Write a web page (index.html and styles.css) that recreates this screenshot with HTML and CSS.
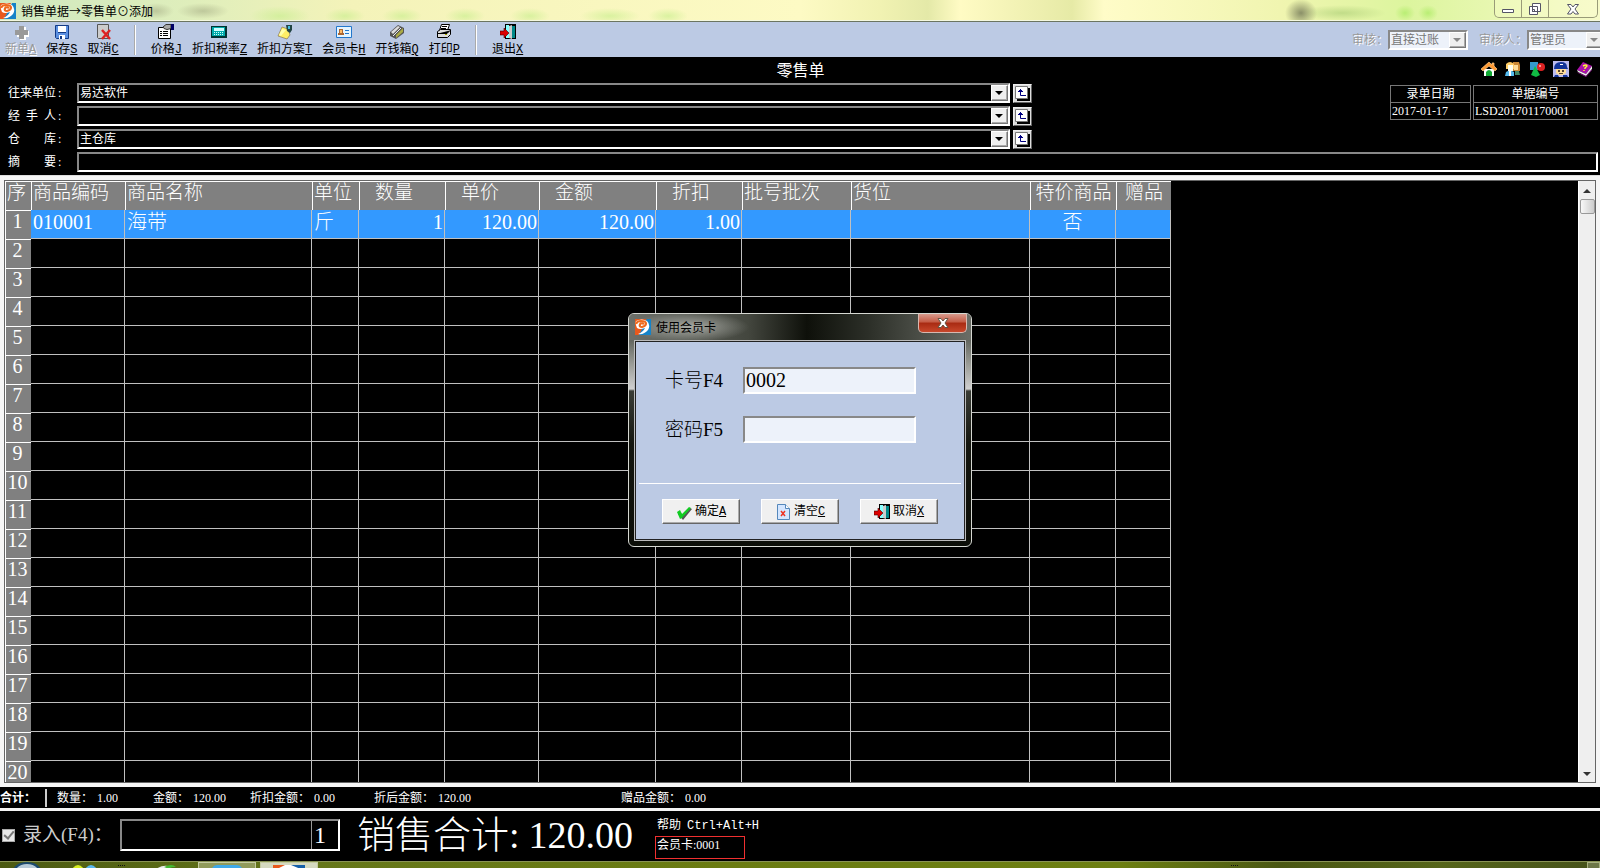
FILE: index.html
```html
<!DOCTYPE html>
<html lang="zh-CN">
<head>
<meta charset="utf-8">
<title>销售单据→零售单</title>
<link rel="stylesheet" href="styles.css">
</head>
<body>
<svg class="defs" aria-hidden="true">
  <symbol id="logo" viewBox="0 0 16 16">
    <path fill="#e8591c" d="M0 0h11L5 16H0z"/><path fill="#1583c8" d="M12 0h4v16H4z"/>
    <path fill="#fff" d="M1 2q6-3 11 0 4 4 1 9-4 5-10 4 5-2 7-6-5 2-8 0Q0 5 1 2z"/>
    <path fill="none" stroke="#ee6a1d" stroke-width="2.200" d="M9 5Q6 3 5 5.500T7 8q4-1 4-3.500T6 2Q2 2 1 5"/>
  </symbol>
  <symbol id="door" viewBox="0 0 16 16">
    <path fill="#000" d="M5 0h11v15H5z"/><path fill="#8ff" d="M6 1h3v13H6z"/><path fill="#088" d="M12 2h3v12h-3z"/><path fill="#ccc" d="m9 2 3-1v14l-3-1z"/>
    <path fill="#d00" stroke="#400" stroke-width=".6" d="M0 7h4V4l5 5-5 5v-3H0z"/>
  </symbol>
  <symbol id="up" viewBox="0 0 16 16">
    <path d="M3 3h13v13H3z"/><path fill="#fff" stroke="#777" d="M1.500 1.500h12v12h-12z"/>
    <path fill="none" stroke="#000080" d="M6.500 4v6.500H12M4 6.500h5M5 5.500h3"/>
  </symbol>
</svg>

<header class="titlebar">
  <svg class="ico"><use href="#logo"/></svg>
  <h1>销售单据→零售单⊙添加</h1>
  <div class="winbtns">
    <button aria-label="最小化"><svg viewBox="0 0 14 14"><path fill="#fff" stroke="#556" d="M1.500 7.500h11v3h-11z"/></svg></button>
    <button aria-label="还原"><svg viewBox="0 0 14 14"><path fill="#fff" stroke="#556" d="M4.500 1.500h8v8h-8zM1.500 4.500h8v8h-8zM4.500 7.500h2v2h-2z"/></svg></button>
    <button class="wide" aria-label="关闭"><svg viewBox="0 0 14 14"><path fill="#fff" stroke="#556" d="M1.500 2.500h3.500l2 2.500 2-2.500h3.500L9 7l3.500 5H9L7 9.500 5 12H1.500L5 7z"/></svg></button>
  </div>
</header>

<nav class="toolbar">
  <button class="tool" disabled><svg viewBox="0 0 16 16"><path fill="#fff" d="M7 3h6v4h3v6h-3v3H7v-3H4V7h3z"/><path fill="#999" d="M6 2h5v4h4v5h-4v4H6v-4H2V6h4z"/></svg><span>新单<u>A</u></span></button>
  <button class="tool"><svg viewBox="0 0 16 16"><path fill="#5b8fe0" stroke="#123a86" d="M1.500 1.500h13v13h-12l-1-1z"/><path fill="#fff" d="M4 2h8v6H4zM5 11h6v4H5z"/><path fill="#123a86" d="M6 12h2v3H6zM4 8h8v1H4z"/></svg><span>保存<u>S</u></span></button>
  <button class="tool"><svg viewBox="0 0 16 16"><path fill="#ccc" stroke="#555" d="M2.500.5h11v14h-10l-1-1z"/><path fill="none" stroke="#d22" stroke-width="2.500" d="m7 6 8 9M15 6l-8 9"/></svg><span>取消<u>C</u></span></button>
  <i class="sep"></i>
  <button class="tool"><svg viewBox="0 0 16 16"><path fill="#fff" stroke="#000" d="M.5 3.500h12v11H.5z"/><path stroke="#000" d="M2 7.500h2m1 0h5M2 9.500h2m1 0h5M2 11.500h2m1 0h5"/><path fill="#aaa" stroke="#333" d="m5 3 3-2.500h5v4l-4 1-3-1z"/><path fill="#006" d="M13 0h3v6h-3z"/></svg><span>价格<u>J</u></span></button>
  <button class="tool"><svg viewBox="0 0 16 16"><path fill="#033" d="M0 2h16v12H0z"/><path fill="#0aa" d="M1 3h13v9H1z"/><path fill="#cff" d="M3 4h10v3H3z"/><path stroke="#cff" stroke-dasharray="1 1" d="M3 8.500h10M3 10.500h10"/></svg><span>折扣税率<u>Z</u></span></button>
  <button class="tool"><svg viewBox="0 0 16 16"><path fill="#fe6" stroke="#875" stroke-width=".7" d="m5 3 6 2 2 6-3 4-9-3z"/><path fill="#ffa" d="m5 5 4 1-5 6-2-1z"/><path fill="#244" d="M9 1h6v5l-2 3-3-2z"/><path fill="#4bd" d="M11 2h2v3h-2z"/></svg><span>折扣方案<u>T</u></span></button>
  <button class="tool"><svg viewBox="0 0 16 16"><path fill="#e5f5ff" stroke="#27c" d="M.5 2.500h15v11H.5z"/><path fill="#a63" d="M3 5h4v4h1v2H2V9h1z"/><path fill="#fb6" d="M4 6h2v3H4z"/><path stroke="#27c" d="M9 6.500h4M9 9.500h4"/></svg><span>会员卡<u>H</u></span></button>
  <button class="tool"><svg viewBox="0 0 16 16"><path fill="#555" d="m1 8 8-7 6 3v5l-8 6-6-3z"/><path fill="#ddd" d="m2 8 7-6 2 1-7 7z"/><path fill="#aa4" d="m7 11 7-7v4l-7 6z"/><path stroke="#eee" d="m4 12 8-8"/></svg><span>开钱箱<u>Q</u></span></button>
  <button class="tool"><svg viewBox="0 0 16 16"><path fill="#fff" stroke="#000" d="M5.500.5h8l-2 6h-8z"/><path fill="#ddd" stroke="#000" d="m1.500 7.500 3-2h10v5l-3 3h-10z"/><path stroke="#000" d="M6 2.500h5M5 4.500h5M2 9.500h9l3-3"/><path fill="#aa0" d="M9 10h2v1H9z"/></svg><span>打印<u>P</u></span></button>
  <i class="sep"></i>
  <button class="tool"><svg><use href="#door"/></svg><span>退出<u>X</u></span></button>
  <div class="audit">
    <label for="audit">审核：</label>
    <div class="combo light"><select id="audit" disabled><option>直接过账</option></select><i class="arrow"></i></div>
    <label for="auditor">审核人：</label>
    <div class="combo light last"><select id="auditor" disabled><option>管理员</option></select><i class="arrow"></i></div>
  </div>
</nav>

<section class="form">
  <div class="caption">
    <h2>零售单</h2>
    <div class="shortcuts">
      <svg viewBox="0 0 16 16"><path fill="#fff" d="M3 8h10v7H3z"/><path fill="#f93" stroke="#fc8" stroke-width=".7" d="M8 1 0 8l2 2 6-5 6 5 2-2-3-3V2h-2v2z"/><path fill="#1a3" d="M5 15v-4q3-4 6 0v4z"/></svg>
      <svg viewBox="0 0 16 16"><path fill="#c83" d="M8 1h6l1 3v6H8z"/><path fill="#fd9" d="M9 4h4v5H9z"/><path fill="#fc6" d="M1 3q4-4 8 0v5H1z"/><path fill="#ffe" d="M3 4h5v6H3z"/><path fill="#5be" d="m3 10-2 1-1 4h9v-4l-2-1z"/><path fill="#fff" d="M4 10h2v5H4z"/><path fill="#486" d="M10 10h4l1 4h-5z"/></svg>
      <svg viewBox="0 0 16 16"><path fill="#39c" d="M1 1h8v8H1z"/><circle cx="12" cy="6" r="4" fill="#d22"/><circle cx="11" cy="5" r="1" fill="#fbb"/><path fill="#1b4" d="m6 5 5 9-4 2-5-2z"/></svg>
      <svg viewBox="0 0 16 16"><path fill="#bbe" d="M0 0h16v16H0z"/><path fill="#139" d="M1 8q0-7 7-7 6 0 6 5l1 2z"/><path fill="#fd9" d="M3 8h10v4l-3 2H6l-3-2z"/><path fill="#543" d="M5 9h2v2H5zM9 9h2v2H9zM6 12h4v1H6z"/><path fill="#fff" d="M7 3h3v1H7z"/><path fill="#139" d="M2 14h3l1 2H1zM10 14h4l1 2h-5z"/></svg>
      <svg viewBox="0 0 16 16"><path fill="#a1a" d="m6 1 9 4-6 8-9-4z"/><path fill="#eee" d="m0 9 9 4 6-8v3l-6 7-8-4z"/><path fill="#818" d="m0 11 9 4 6-7v1l-6 7-8-4z"/><path fill="none" stroke="#ff3" stroke-width="1.400" d="M6 5q4-2 4 0l-2 2v1M7 9v1"/></svg>
    </div>
  </div>
  <div class="formbody">
    <div class="fields">
      <label for="f1">往来单位</label><b>:</b>
      <div class="combo"><select id="f1"><option>易达软件</option></select><i class="arrow"></i></div><button class="pick" aria-label="选择单位"><svg><use href="#up"/></svg></button>
      <label for="f2">经 手 人</label><b>:</b>
      <div class="combo"><select id="f2"><option></option></select><i class="arrow"></i></div><button class="pick" aria-label="选择经手人"><svg><use href="#up"/></svg></button>
      <label for="f3">仓 库</label><b>:</b>
      <div class="combo"><select id="f3"><option>主仓库</option></select><i class="arrow"></i></div><button class="pick" aria-label="选择仓库"><svg><use href="#up"/></svg></button>
    </div>
    <dl class="meta date"><dt>录单日期</dt><dd>2017-01-17</dd></dl>
    <dl class="meta code"><dt>单据编号</dt><dd>LSD201701170001</dd></dl>
  </div>
  <div class="memo"><label for="f4">摘 要</label><b>:</b><input id="f4" type="text"></div>
</section>

<main class="gridpane">
  <div class="gridbox">
    <div class="gridscroll">
      <table>
        <colgroup><col class="w26"><col class="w94"><col class="w187"><col class="w47"><col class="w86"><col class="w94"><col class="w117"><col class="w86"><col class="w109"><col class="w179"><col class="w86"><col class="w55"></colgroup>
        <thead><tr><th class="no">序</th><th>商品编码</th><th>商品名称</th><th>单位</th><th class="n">数量</th><th class="n">单价</th><th class="n">金额</th><th class="n">折扣</th><th>批号批次</th><th>货位</th><th class="c">特价商品</th><th class="c">赠品</th></tr></thead>
        <tbody>
          <tr class="on"><th>1</th><td>010001</td><td>海带</td><td>斤</td><td class="r">1</td><td class="r">120.00</td><td class="r">120.00</td><td class="r">1.00</td><td></td><td></td><td class="c">否</td><td></td></tr>
          <tr><th>2</th><td></td><td></td><td></td><td></td><td></td><td></td><td></td><td></td><td></td><td></td><td></td></tr>
          <tr><th>3</th><td></td><td></td><td></td><td></td><td></td><td></td><td></td><td></td><td></td><td></td><td></td></tr>
          <tr><th>4</th><td></td><td></td><td></td><td></td><td></td><td></td><td></td><td></td><td></td><td></td><td></td></tr>
          <tr><th>5</th><td></td><td></td><td></td><td></td><td></td><td></td><td></td><td></td><td></td><td></td><td></td></tr>
          <tr><th>6</th><td></td><td></td><td></td><td></td><td></td><td></td><td></td><td></td><td></td><td></td><td></td></tr>
          <tr><th>7</th><td></td><td></td><td></td><td></td><td></td><td></td><td></td><td></td><td></td><td></td><td></td></tr>
          <tr><th>8</th><td></td><td></td><td></td><td></td><td></td><td></td><td></td><td></td><td></td><td></td><td></td></tr>
          <tr><th>9</th><td></td><td></td><td></td><td></td><td></td><td></td><td></td><td></td><td></td><td></td><td></td></tr>
          <tr><th>10</th><td></td><td></td><td></td><td></td><td></td><td></td><td></td><td></td><td></td><td></td><td></td></tr>
          <tr><th>11</th><td></td><td></td><td></td><td></td><td></td><td></td><td></td><td></td><td></td><td></td><td></td></tr>
          <tr><th>12</th><td></td><td></td><td></td><td></td><td></td><td></td><td></td><td></td><td></td><td></td><td></td></tr>
          <tr><th>13</th><td></td><td></td><td></td><td></td><td></td><td></td><td></td><td></td><td></td><td></td><td></td></tr>
          <tr><th>14</th><td></td><td></td><td></td><td></td><td></td><td></td><td></td><td></td><td></td><td></td><td></td></tr>
          <tr><th>15</th><td></td><td></td><td></td><td></td><td></td><td></td><td></td><td></td><td></td><td></td><td></td></tr>
          <tr><th>16</th><td></td><td></td><td></td><td></td><td></td><td></td><td></td><td></td><td></td><td></td><td></td></tr>
          <tr><th>17</th><td></td><td></td><td></td><td></td><td></td><td></td><td></td><td></td><td></td><td></td><td></td></tr>
          <tr><th>18</th><td></td><td></td><td></td><td></td><td></td><td></td><td></td><td></td><td></td><td></td><td></td></tr>
          <tr><th>19</th><td></td><td></td><td></td><td></td><td></td><td></td><td></td><td></td><td></td><td></td><td></td></tr>
          <tr><th>20</th><td></td><td></td><td></td><td></td><td></td><td></td><td></td><td></td><td></td><td></td><td></td></tr>
        </tbody>
      </table>
    </div>
    <div class="scrollbar"><i class="sup"></i><i class="thumb"></i><i class="sdown"></i></div>
  </div>
</main>

<section class="totals">
  <strong>合计：</strong><i class="bar"></i>
  <span>数量：<em>1.00</em></span><span>金额：<em>120.00</em></span><span>折扣金额：<em>0.00</em></span><span>折后金额：<em>120.00</em></span><span>赠品金额：<em>0.00</em></span>
</section>

<section class="entry">
  <input type="checkbox" id="scan" checked disabled>
  <label for="scan">录入(F4)：</label>
  <div class="entrybox"><input type="text" aria-label="录入"><input type="text" class="qty" value="1" aria-label="数量"></div>
  <div class="sum"><span>销售合计:</span><span>120.00</span></div>
  <div class="help"><p>帮助 <kbd>Ctrl+Alt+H</kbd></p><p class="card">会员卡:0001</p></div>
</section>

<footer class="taskbar">
  <svg class="orb" viewBox="0 0 28 7"><path fill="#1d4a6d" d="M0 7Q4 0 14 0t14 7z"/><path fill="#b8cbd8" d="M3 7q4-5 11-5t11 5z"/></svg>
  <svg class="pair" viewBox="0 0 28 4"><path fill="#d8f020" d="M0 4q6-8 12 0z"/><path fill="#5ab8f0" d="M13 4q6-8 12 0z"/></svg>
  <i class="dots"></i>
  <svg class="leaf" viewBox="0 0 22 4"><path fill="#eee" d="M0 4q6-4 12-3v3z"/><path fill="#4b3" d="M8 2q8-4 12 0-6 0-7 2z"/></svg>
  <div class="task"><svg viewBox="0 0 32 5"><path fill="#3fa9e8" d="M0 5q2-5 6-5h20q4 0 6 5z"/></svg></div>
  <div class="task active"><svg viewBox="0 0 32 5"><path fill="#fff" d="M0 0h32v5H0z"/><path fill="#e8591c" d="M0 0h12L2 5H0z"/><path fill="#1560a8" d="M18 0h14v5h-2z"/></svg></div>
  <i class="dots far"></i>
  <time>16:07</time><i class="peek"></i>
</footer>

<div class="dialog" role="dialog" aria-labelledby="dt">
  <div class="dhead"><svg class="ico"><use href="#logo"/></svg><h3 id="dt">使用会员卡</h3>
    <button class="dclose" aria-label="关闭"><svg viewBox="0 0 14 14"><path fill="#fff" stroke="#654" d="M2 2.500h3l2 2.500 2-2.500h3L9 7l3 4.500H9L7 9l-2 2.500H2L5 7z"/></svg></button></div>
  <div class="dbody">
    <div class="drow"><label for="card">卡号F4</label><input id="card" type="text" value="0002"></div>
    <div class="drow"><label for="pwd">密码F5</label><input id="pwd" type="password"></div>
    <hr>
    <div class="dbtns">
      <button><svg viewBox="0 0 16 16"><path fill="#555" d="m2 10 3-1 2 3 7-8 2 1-9 11z"/><path fill="#1c2" d="m1 8 3-2 2 4 7-7 2 1-9 10-2 1z"/></svg><span>确定<u>A</u></span></button>
      <button><svg viewBox="0 0 16 16"><path fill="#d4e6ff" stroke="#58b" d="M2.500.5h8l4 4v11h-12z"/><path fill="#fff" stroke="#58b" d="M10.500.5v4h4"/><path stroke="#e32" stroke-width="1.500" d="m6 7 4 5m0-5-4 5"/></svg><span>清空<u>C</u></span></button>
      <button><svg><use href="#door"/></svg><span>取消<u>X</u></span></button>
    </div>
  </div>
</div>
</body>
</html>
```

FILE: styles.css
```css
* { box-sizing: border-box; }
html, body { height: 100%; }
body {
  margin: 0; display: flex; flex-direction: column; position: relative; overflow: hidden;
  background: #000; color: #fff;
  font: 12px/16px "Liberation Serif", "Noto Sans CJK SC", sans-serif;
}
button, input, select { font: inherit; color: inherit; margin: 0; padding: 0; border-radius: 0; }
h1, h2, h3, p, dl, dd { margin: 0; font-weight: normal; }
i { display: block; font-style: normal; }
u { font-family: "Liberation Mono", monospace; font-size: 12px; }
.defs { position: absolute; width: 0; height: 0; }
.ico { width: 16px; height: 16px; flex: none; }

/* Window title */
.titlebar {
  flex: none; height: 22px; display: flex; align-items: center; gap: 5px; color: #000;
  border-bottom: 1px solid #6b7560; box-shadow: inset 0 -1px #f4f8e0;
  background:
    radial-gradient(ellipse 18px 8px at 156px 11px, #a7ae8699, transparent),
    radial-gradient(ellipse 26px 8px at 203px 11px, #a7ae8699, transparent),
    radial-gradient(ellipse 30px 10px at 280px 16px, #c4ee8a99, transparent),
    radial-gradient(ellipse 20px 8px at 345px 16px, #c4ee8a99, transparent),
    radial-gradient(ellipse 20px 8px at 402px 16px, #c4ee8a99, transparent),
    radial-gradient(ellipse 20px 8px at 465px 16px, #c4ee8a99, transparent),
    radial-gradient(ellipse 20px 8px at 530px 16px, #c4ee8a99, transparent),
    radial-gradient(ellipse 30px 8px at 610px 16px, #c4ee8a99, transparent),
    radial-gradient(ellipse 20px 8px at 668px 16px, #c4ee8a99, transparent),
    radial-gradient(ellipse 16px 14px at 1301px 13px, #8b9068, transparent),
    radial-gradient(ellipse 44px 8px at 1342px 13px, #a8cc7499, transparent),
    radial-gradient(ellipse 10px 8px at 1405px 13px, #b9ee74, transparent),
    radial-gradient(ellipse 10px 8px at 1428px 13px, #b9ee74, transparent),
    linear-gradient(to right, #cfe8c0, #dfeebb 12%, #f4f3b9 22%, #fdfac4 50%, #f1f2b2 55%, #e4e9a8 58%, #fffbc4 60%, #e6eaa6 67%, #fffcc8 69%, #f0f5b0 80%, #dcf59e 88%, #f6fac8);
}
.titlebar h1 { font-family: "Noto Sans CJK SC", sans-serif; font-size: 12px; }
.winbtns {
  margin: 0 2px auto auto; display: flex; height: 18px; overflow: hidden;
  border: 1px solid #999b78; border-top: 0; border-radius: 0 0 5px 5px; background: #ffffd840;
}
.winbtns button { width: 27px; border: 0; border-right: 1px solid #999b78; background: none; }
.winbtns .wide { width: 48px; border: 0; }
.winbtns svg { display: block; width: 14px; height: 14px; margin: auto; }

/* Toolbar */
.toolbar { flex: none; height: 35px; display: flex; align-items: center; gap: 10px; padding-left: 5px; background: #bccae4; color: #000; overflow: hidden; }
.tool { flex: none; border: 0; background: none; display: flex; flex-direction: column; align-items: center; gap: 1px; padding-top: 3px; white-space: nowrap; }
.tool svg { width: 16px; height: 16px; }
.tool:disabled { color: #999; text-shadow: 1px 1px #fff; }
.sep { flex: none; width: 2px; height: 30px; margin: 0 5px; background: #fff; border-left: 1px solid #aaa; }
.audit { margin-left: auto; display: flex; align-items: center; color: #999; }
.audit label { text-shadow: 1px 1px #fff; }
.audit label + .combo { width: 80px; height: 20px; margin-right: 11px; }
.audit label + .combo.last { width: 78px; margin-right: -5px; }

/* Combo boxes */
.combo { position: relative; height: 20px; border: 2px solid; border-color: #888 #fff #fff #888; background: #000; }
.combo select { appearance: none; width: 100%; height: 100%; display: block; border: 0; outline: 0; background: none; padding-left: 1px; line-height: 16px; opacity: 1; }
.combo.light { background: #edf2fa; color: #777; }
.arrow {
  position: absolute; right: 0; top: 0; bottom: 0; width: 17px; pointer-events: none;
  background: #efefef; border: 1px solid; border-color: #fff #777 #777 #fff; box-shadow: inset -1px -1px #aaa;
}
.arrow::after { content: ""; position: absolute; left: 3px; top: 5px; border: 4px solid transparent; border-top-color: #000; border-bottom: 0; }
.light .arrow::after { border-top-color: #888; }

/* Document form */
.form { flex: none; padding: 0 2px 4px 8px; }
.caption { display: grid; grid-template-columns: 1fr auto 1fr; align-items: center; height: 23px; margin-bottom: 3px; padding-right: 5px; }
.caption h2 { grid-column: 2; font: 16px/20px "Noto Sans CJK SC", sans-serif; }
.shortcuts { justify-self: end; display: flex; gap: 8px; }
.shortcuts svg { width: 16px; height: 16px; }
.formbody { display: flex; align-items: flex-start; gap: 2px; }
.fields { flex: 0 0 64.4%; display: grid; grid-template-columns: 48px 21px 1fr 19px; gap: 3px 0; margin-right: auto; align-items: center; }
.fields label, .memo label { text-align: justify; text-align-last: justify; }
.fields b, .memo b { font-weight: normal; padding-left: 2px; }
.pick { width: 19px; height: 19px; border: 1px solid; border-color: #eee #666 #666 #eee; background: #ddd; }
.fields .combo { margin-right: 3px; }
.pick svg { display: block; width: 16px; height: 16px; }
.memo { display: grid; grid-template-columns: 48px 21px 1fr; align-items: center; margin-top: 3px; }
.memo input { width: 100%; height: 20px; border: 2px solid; border-color: #888 #fff #fff #888; background: #000; outline: 0; }
.meta { margin-top: 2px; border: 1px solid #777; line-height: 17px; }
.meta dt { text-align: center; border-bottom: 1px solid #777; height: 17px; }
.meta dd { padding-left: 1px; line-height: 16px; }
.date { width: 81px; }
.code { width: 125px; }

/* Item grid */
.gridpane { flex: 1; min-height: 0; background: #f6f6f6; padding: 4px 4px 4px; display: flex; border-top: 1px solid #ddd; margin-top: -1px; }
.gridbox { flex: 1; min-width: 0; display: flex; border: 1px solid #666; background: #000; }
.gridscroll { flex: 1; min-width: 0; overflow: hidden; }
table { table-layout: fixed; width: 1166px; border-collapse: separate; border-spacing: 0; font-size: 19px; line-height: 24px; }
.w26 { width: 26px; } .w47 { width: 47px; } .w55 { width: 55px; } .w86 { width: 86px; } .w94 { width: 94px; }
.w109 { width: 109px; } .w117 { width: 117px; } .w179 { width: 179px; } .w187 { width: 187px; }
th, td { height: 29px; padding: 0 2px; overflow: hidden; white-space: nowrap; text-align: left; vertical-align: top; font-weight: 300; }
th { background: #808080; border-top: 1px solid #fff; border-left: 1px solid #fff; padding: 0 1px; line-height: 22px; }
tbody th { text-align: center; padding: 0 2px 0 0; font-size: 20px; line-height: 20px; }
td { border-right: 1px solid #c0c0c0; border-bottom: 1px solid #c0c0c0; }
td { font-size: 20px; }
.on td { background: #3399ff; }
.r { text-align: right; padding-right: 1px; }
.c { text-align: center; }
.n { padding-left: 15px; }
.scrollbar { flex: none; width: 17px; background: #efefef; display: flex; flex-direction: column; align-items: center; padding: 8px 0 6px; border-left: 1px solid #fff; }
.sup { border: 4px solid transparent; border-top: 0; border-bottom-color: #333; }
.thumb { width: 15px; height: 15px; margin-top: 6px; border: 1px solid #999; border-radius: 2px; background: linear-gradient(to right, #f8f8f8, #ccc); }
.sdown { margin-top: auto; border: 4px solid transparent; border-bottom: 0; border-top-color: #333; }

/* Totals */
.totals { flex: none; height: 24px; display: grid; grid-template-columns: 45px 12px 96px 97px 124px 247px 1fr; align-items: center; border-bottom: 3px solid #f4f4f4; white-space: nowrap; }
.totals em { font-style: normal; padding-left: 4px; }
.bar { width: 2px; height: 18px; background: #ccc; }

/* Entry line */
.entry { flex: none; height: 50px; display: flex; align-items: center; padding: 0 0 2px 2px; white-space: nowrap; }
.entry > input { width: 13px; height: 13px; flex: none; margin-right: 8px; appearance: none; background: #e8e8e8; border: 1px solid #aaa; display: grid; place-content: center; }
.entry > input::after { content: ""; width: 4px; height: 8px; border: solid #777; border-width: 0 2px 2px 0; transform: rotate(40deg); margin-top: -2px; }
.entry > label { width: 97px; font-size: 19px; line-height: 24px; color: #ccc; }
.entrybox { width: 220px; height: 32px; display: flex; border: 2px solid; border-color: #888 #fff #fff #888; margin-right: 17px; }
.entrybox input { flex: 1; min-width: 0; border: 0; background: #000; outline: 0; font-size: 24px; }
.entrybox .qty { flex: 0 0 27px; border-left: 1px solid #999; padding-left: 2px; }
.sum { display: flex; width: 298px; font-size: 38px; line-height: 44px; font-weight: 300; gap: 9px; }
.help { align-self: stretch; padding-top: 6px; }
.help p { padding-left: 2px; }
.help kbd { font: 12px/16px "Liberation Mono", monospace; padding-left: 3px; }
.help .card { width: 90px; height: 23px; margin-top: 2px; border: 1px solid #f03030; padding-left: 1px; }

/* Taskbar */
.taskbar { flex: none; height: 7px; overflow: hidden; display: flex; align-items: flex-start; padding-left: 13px; border-top: 1px solid #8a9455; background: linear-gradient(to right, #4c5a12, #66771a 20%, #6b7c12 45%, #6d7f12 70%, #4a5713 80%, #56651a 90%, #46521a); }
.taskbar svg { flex: none; }
.orb { width: 28px; height: 7px; margin-right: 31px; }
.pair { width: 28px; height: 4px; margin: 3px 18px 0 0; }
.dots { width: 7px; height: 1px; margin: 3px 31px 0 0; border-top: 1px dotted #111; }
.leaf { width: 22px; height: 4px; margin: 3px 20px 0 0; }
.task { flex: none; width: 58px; height: 7px; margin-right: 4px; border: 1px solid #c5cba0; background: #909a5a; display: flex; justify-content: center; }
.task.active { background: #d5d9c0; }
.task svg { width: 32px; height: 5px; margin-top: 2px; }
.far { margin: 3px 292px 0 auto; }
.taskbar time { padding-top: 2px; margin-right: 30px; }
.peek { width: 13px; height: 7px; border: 1px solid #a8b080; background: #6d7748; }

/* Member card dialog */
.dialog {
  position: absolute; left: calc(50% - 172px); top: 313px; width: 344px; padding: 0 5px 5px; color: #000;
  border: 1px solid #d6d8d2; border-radius: 6px;
  background: linear-gradient(#4c4f48, #63665f 26px, #9a9c96 50px, #d0d0d0 75px, #3a3d36 77px, #14160f 130px, #0c0e08);
}
.dhead { display: flex; align-items: center; gap: 5px; height: 26px; margin: 0 -5px; padding-left: 6px; border-radius: 5px 5px 0 0; background: radial-gradient(ellipse 60px 15px at 60px 13px, #a8aaa4, transparent), linear-gradient(to right, #6d706a, #43463e 35%, #0e100a 52%, #2c2f28 70%, #6a6d66); }
.dhead h3 { font-family: "Noto Sans CJK SC", sans-serif; font-size: 12px; }
.dclose { width: 49px; height: 19px; margin: 0 4px auto auto; border: 1px solid #d8b8b0; border-top: 0; border-radius: 0 0 5px 5px; background: linear-gradient(#d89a8c, #c45a44 45%, #a82a12 50%, #c8482c); }
.dclose svg { display: block; width: 14px; height: 14px; margin: auto; }
.dbody { border: 1px solid #bbb; outline: 1px solid #222; outline-offset: -2px; background: #bccae4; padding: 26px 4px 16px; }
.drow { display: flex; align-items: center; padding-left: 26px; margin-bottom: 22px; font-size: 19px; line-height: 24px; font-weight: 300; }
.drow label { width: 78px; }
.drow input { width: 173px; height: 27px; border: 2px solid; border-color: #888 #fff #fff #888; background: #edf2fa; outline: 0; padding-left: 1px; font-size: 20px; }
.dbody hr { margin: 40px 0 15px; border: 0; border-top: 1px solid #fff; }
.dbtns { display: flex; gap: 21px; padding-left: 23px; }
.dbtns button { width: 78px; height: 25px; display: flex; align-items: center; justify-content: center; gap: 3px; border: 1px solid; border-color: #fff #666 #666 #fff; box-shadow: inset -1px -1px #aaa; background: #f0f0f0; white-space: nowrap; }
.dbtns svg { width: 16px; height: 16px; }
```
